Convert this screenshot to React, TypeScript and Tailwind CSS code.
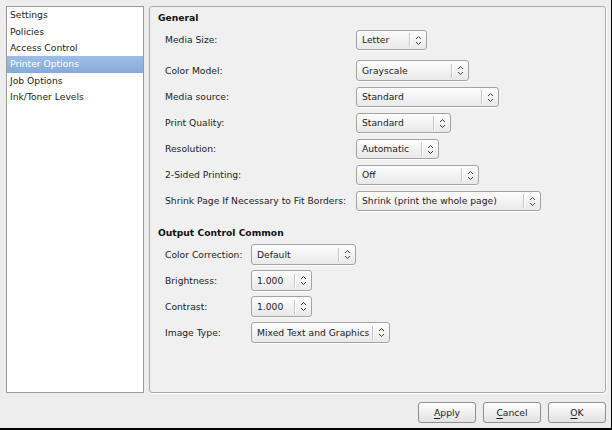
import React from "react";

const font = { fontFamily: '"DejaVu Sans", "Liberation Sans", sans-serif' };

function Arrows() {
  return (
    <svg width="7" height="11" viewBox="0 0 7 11" className="text-[#3a3a3a]">
      <path d="M1 4 L3.5 1.5 L6 4" fill="none" stroke="currentColor" strokeWidth="1" />
      <path d="M1 7 L3.5 9.5 L6 7" fill="none" stroke="currentColor" strokeWidth="1" />
    </svg>
  );
}

function Combo({ value, width, height = "h-[20px]" }: { value: string; width: string; height?: string }) {
  return (
    <div
      className={`${width} ${height} flex items-center rounded-[3px] border border-[#a3a3a3] bg-gradient-to-b from-[#fdfdfd] to-[#e9e9e9] shadow-[0_1px_0_rgba(255,255,255,0.8)]`}
    >
      <span className="flex-1 pl-[5px] text-[#1c1c1c] whitespace-nowrap overflow-hidden">{value}</span>
      <div className="h-[14px] w-px bg-[#c6c6c6] border-r border-white box-content" />
      <div className="w-[15px] flex items-center justify-center">
        <Arrows />
      </div>
    </div>
  );
}

function Row({
  label,
  labelWidth,
  children,
  className,
}: {
  label: string;
  labelWidth: string;
  children: React.ReactNode;
  className?: string;
}) {
  return (
    <div className={`flex items-center ${className ?? ""}`}>
      <span className={`${labelWidth} text-[#1c1c1c] whitespace-nowrap`}>{label}</span>
      {children}
    </div>
  );
}

function Button({ label }: { label: string }) {
  return (
    <button className="w-[58px] h-[21px] rounded-[3px] border border-[#8f8f8f] bg-gradient-to-b from-[#fefefe] to-[#e2e2e2] text-[#1c1c1c] flex items-center justify-center">
      <span>
        <span className="underline underline-offset-2">{label[0]}</span>
        {label.slice(1)}
      </span>
    </button>
  );
}

export default function App() {
  const items = ["Settings", "Policies", "Access Control", "Printer Options", "Job Options", "Ink/Toner Levels"];

  return (
    <div
      style={font}
      className="w-[612px] h-[430px] bg-[#ededed] border-r border-b-2 border-black text-[9.2px] leading-[14px] flex flex-col pt-[6px] pl-[6px] pr-[5px]"
    >
      <div className="flex gap-[5px] h-[387px]">
        {/* sidebar list */}
        <div className="w-[138px] h-full bg-white border border-[#9b9b9b] pt-0">
          {items.map((it) => (
            <div
              key={it}
              className={`h-[16.4px] flex items-center pl-[3px] ${
                it === "Printer Options"
                  ? "bg-gradient-to-b from-[#9dbde6] to-[#86aad8] text-white"
                  : "text-[#1c1c1c]"
              }`}
            >
              {it}
            </div>
          ))}
        </div>

        {/* options panel */}
        <div className="flex-1 h-full rounded-[3px] border border-[#a9a9a9] bg-[#f0f0f0] shadow-[1px_1px_0_#ffffff] pl-[8px] pt-[4px]">
          <div className="font-bold text-[#111]">General</div>
          <div className="pl-[7px] flex flex-col">
            <Row label="Media Size:" labelWidth="w-[191px]" className="mt-[5px]">
              <Combo value="Letter" width="w-[71px]" />
            </Row>
            <Row label="Color Model:" labelWidth="w-[191px]" className="mt-[10px]">
              <Combo value="Grayscale" width="w-[113px]" height="h-[21px]" />
            </Row>
            <Row label="Media source:" labelWidth="w-[191px]" className="mt-[6px]">
              <Combo value="Standard" width="w-[143px]" />
            </Row>
            <Row label="Print Quality:" labelWidth="w-[191px]" className="mt-[6px]">
              <Combo value="Standard" width="w-[95px]" />
            </Row>
            <Row label="Resolution:" labelWidth="w-[191px]" className="mt-[6px]">
              <Combo value="Automatic" width="w-[83px]" />
            </Row>
            <Row label="2-Sided Printing:" labelWidth="w-[191px]" className="mt-[6px]">
              <Combo value="Off" width="w-[123px]" />
            </Row>
            <Row label="Shrink Page If Necessary to Fit Borders:" labelWidth="w-[191px]" className="mt-[6px]">
              <Combo value="Shrink (print the whole page)" width="w-[185px]" />
            </Row>
          </div>

          <div className="font-bold text-[#111] mt-[15px]">Output Control Common</div>
          <div className="pl-[7px] flex flex-col gap-[5px] mt-[4px]">
            <Row label="Color Correction:" labelWidth="w-[86px]">
              <Combo value="Default" width="w-[105px]" height="h-[21px]" />
            </Row>
            <Row label="Brightness:" labelWidth="w-[86px]">
              <Combo value="1.000" width="w-[61px]" height="h-[21px]" />
            </Row>
            <Row label="Contrast:" labelWidth="w-[86px]">
              <Combo value="1.000" width="w-[61px]" height="h-[21px]" />
            </Row>
            <Row label="Image Type:" labelWidth="w-[86px]">
              <Combo value="Mixed Text and Graphics" width="w-[139px]" height="h-[21px]" />
            </Row>
          </div>
        </div>
      </div>

      {/* buttons */}
      <div className="flex justify-end gap-[7px] mt-[9px] pr-0">
        <Button label="Apply" />
        <Button label="Cancel" />
        <Button label="OK" />
      </div>
    </div>
  );
}
